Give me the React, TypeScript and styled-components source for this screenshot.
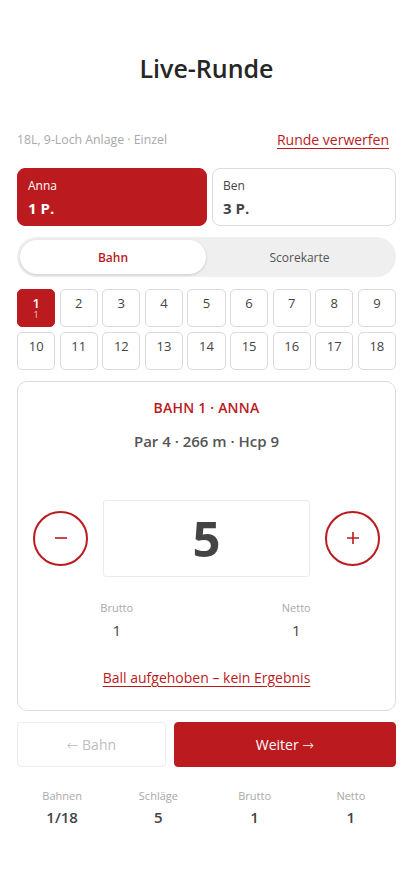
import styled, { createGlobalStyle } from "styled-components";

const RED = "#bb1a1e";

const GlobalStyle = createGlobalStyle`
  body {
    margin: 0;
    background: #ffffff;
    font-family: "Open Sans", "Noto Sans", sans-serif;
    color: #333;
  }
  * { box-sizing: border-box; }
`;

const Page = styled.div`
  width: 413px;
  padding: 50px 17px 40px;
  display: flex;
  flex-direction: column;
`;

const Title = styled.h1`
  margin: 0;
  font-size: 25px;
  line-height: 36px;
  font-weight: 600;
  text-align: center;
  color: #262626;
`;

const InfoRow = styled.div`
  margin-top: 43px;
  display: flex;
  justify-content: space-between;
  align-items: center;
  height: 20px;
`;

const InfoText = styled.span`
  font-size: 12.3px;
  color: #a9a9a9;
`;

const DiscardLink = styled.a`
  font-size: 14px;
  color: ${RED};
  text-decoration: underline;
  text-underline-offset: 3px;
  margin-right: 7px;
`;

const Players = styled.div`
  margin-top: 19px;
  display: grid;
  grid-template-columns: 190px 1fr;
  gap: 5px;
`;

const PlayerCard = styled.div<{ $active?: boolean }>`
  height: 58px;
  border-radius: 8px;
  padding: 8px 10px 7px;
  border: 1px solid ${(p) => (p.$active ? RED : "#dcdcdc")};
  background: ${(p) => (p.$active ? RED : "#fff")};
  color: ${(p) => (p.$active ? "#fff" : "#444")};
`;

const PlayerName = styled.div`
  font-size: 12px;
  line-height: 18px;
`;

const PlayerPoints = styled.div`
  margin-top: 3px;
  font-size: 15px;
  line-height: 20px;
  font-weight: 700;
`;

const Tabs = styled.div`
  margin-top: 11px;
  height: 40px;
  border-radius: 20px;
  background: #efefef;
  padding: 3px;
  display: grid;
  grid-template-columns: 186px 1fr;
`;

const Tab = styled.div<{ $active?: boolean }>`
  border-radius: 17px;
  display: flex;
  align-items: center;
  justify-content: center;
  font-size: 12px;
  font-weight: ${(p) => (p.$active ? 600 : 400)};
  color: ${(p) => (p.$active ? RED : "#555")};
  background: ${(p) => (p.$active ? "#fff" : "transparent")};
  box-shadow: ${(p) => (p.$active ? "0 1px 3px rgba(0,0,0,0.15)" : "none")};
`;

const HoleGrid = styled.div`
  margin-top: 12px;
  display: grid;
  grid-template-columns: repeat(9, 1fr);
  gap: 4.5px 4.3px;
`;

const Hole = styled.div<{ $active?: boolean }>`
  height: 38px;
  border-radius: 5px;
  border: 1px solid ${(p) => (p.$active ? RED : "#dadada")};
  background: ${(p) => (p.$active ? RED : "#fff")};
  color: ${(p) => (p.$active ? "#fff" : "#444")};
  display: flex;
  flex-direction: column;
  align-items: center;
  padding-top: 6px;
`;

const HoleNumber = styled.div<{ $active?: boolean }>`
  font-size: 13px;
  line-height: 14px;
  font-weight: ${(p) => (p.$active ? 600 : 400)};
`;

const HoleScore = styled.div`
  font-size: 9px;
  line-height: 9px;
  color: #f3c9ca;
`;

const HoleCard = styled.div`
  margin-top: 11px;
  border: 1px solid #dcdcdc;
  border-radius: 10px;
  padding: 14px 15px 21px;
  display: flex;
  flex-direction: column;
  align-items: center;
`;

const HoleHeading = styled.div`
  font-size: 14px;
  line-height: 24px;
  font-weight: 600;
  color: ${RED};
  letter-spacing: 0.2px;
`;

const HoleMeta = styled.div`
  margin-top: 10px;
  font-size: 15px;
  line-height: 22px;
  font-weight: 600;
  color: #555;
`;

const Stepper = styled.div`
  margin-top: 48px;
  width: 100%;
  display: grid;
  grid-template-columns: 55px 1fr 55px;
  gap: 15px;
  align-items: center;
`;

const RoundButton = styled.button`
  width: 55px;
  height: 55px;
  border-radius: 50%;
  border: 2px solid ${RED};
  background: #fff;
  color: ${RED};
  display: flex;
  align-items: center;
  justify-content: center;
  padding: 0;
`;

const ScoreBox = styled.div`
  height: 77px;
  border: 1px solid #ebebeb;
  border-radius: 3px;
  display: flex;
  align-items: center;
  justify-content: center;
  font-size: 49px;
  font-weight: 700;
  color: #444;
`;

const ResultGrid = styled.div`
  margin-top: 23px;
  width: 359px;
  display: grid;
  grid-template-columns: 1fr 1fr;
`;

const ResultCell = styled.div`
  display: flex;
  flex-direction: column;
  align-items: center;
`;

const SmallLabel = styled.div`
  font-size: 11px;
  line-height: 16px;
  color: #a8a8a8;
`;

const ResultValue = styled.div`
  margin-top: 3px;
  font-size: 15px;
  line-height: 22px;
  color: #444;
`;

const PickupLink = styled.a`
  margin-top: 26px;
  font-size: 14px;
  line-height: 22px;
  color: ${RED};
  text-decoration: underline;
  text-underline-offset: 3px;
`;

const NavRow = styled.div`
  margin-top: 11px;
  display: flex;
  gap: 8px;
`;

const NavButton = styled.button<{ $primary?: boolean; $grow: number }>`
  flex: ${(p) => p.$grow} 1 0;
  padding: 0;
  height: 45px;
  border-radius: 4px;
  font-family: inherit;
  font-size: 14px;
  border: 1px solid ${(p) => (p.$primary ? RED : "#ececec")};
  background: ${(p) => (p.$primary ? RED : "#fff")};
  color: ${(p) => (p.$primary ? "#fff" : "#bdbdbd")};
`;

const Arrow = styled.span`
  font-family: "Noto Sans", "DejaVu Sans", sans-serif;
  font-size: 14px;
  font-weight: 300;
`;

const Stats = styled.div`
  margin: 21px -3px 0;
  display: grid;
  grid-template-columns: repeat(4, 1fr);
`;

const StatValue = styled.div`
  margin-top: 3px;
  font-size: 15px;
  line-height: 20px;
  font-weight: 600;
  color: #444;
`;

const holes = Array.from({ length: 18 }, (_, i) => i + 1);

const stats = [
  { label: "Bahnen", value: "1/18" },
  { label: "Schläge", value: "5" },
  { label: "Brutto", value: "1" },
  { label: "Netto", value: "1" },
];

export default function App() {
  return (
    <>
      <GlobalStyle />
      <Page>
        <Title>Live-Runde</Title>

        <InfoRow>
          <InfoText>18L, 9-Loch Anlage · Einzel</InfoText>
          <DiscardLink>Runde verwerfen</DiscardLink>
        </InfoRow>

        <Players>
          <PlayerCard $active>
            <PlayerName>Anna</PlayerName>
            <PlayerPoints>1 P.</PlayerPoints>
          </PlayerCard>
          <PlayerCard>
            <PlayerName>Ben</PlayerName>
            <PlayerPoints>3 P.</PlayerPoints>
          </PlayerCard>
        </Players>

        <Tabs>
          <Tab $active>Bahn</Tab>
          <Tab>Scorekarte</Tab>
        </Tabs>

        <HoleGrid>
          {holes.map((n) => (
            <Hole key={n} $active={n === 1}>
              <HoleNumber $active={n === 1}>{n}</HoleNumber>
              {n === 1 && <HoleScore>1</HoleScore>}
            </Hole>
          ))}
        </HoleGrid>

        <HoleCard>
          <HoleHeading>BAHN 1 · ANNA</HoleHeading>
          <HoleMeta>Par 4 · 266 m · Hcp 9</HoleMeta>

          <Stepper>
            <RoundButton aria-label="weniger">
              <svg width="14" height="14" viewBox="0 0 14 14">
                <path d="M1 7h12" stroke="currentColor" strokeWidth="1.6" />
              </svg>
            </RoundButton>
            <ScoreBox>5</ScoreBox>
            <RoundButton aria-label="mehr">
              <svg width="14" height="14" viewBox="0 0 14 14">
                <path d="M1 7h12M7 1v12" stroke="currentColor" strokeWidth="1.6" />
              </svg>
            </RoundButton>
          </Stepper>

          <ResultGrid>
            <ResultCell>
              <SmallLabel>Brutto</SmallLabel>
              <ResultValue>1</ResultValue>
            </ResultCell>
            <ResultCell>
              <SmallLabel>Netto</SmallLabel>
              <ResultValue>1</ResultValue>
            </ResultCell>
          </ResultGrid>

          <PickupLink>Ball aufgehoben – kein Ergebnis</PickupLink>
        </HoleCard>

        <NavRow>
          <NavButton $grow={2}>
            <Arrow>←</Arrow> Bahn
          </NavButton>
          <NavButton $grow={3} $primary>
            Weiter <Arrow>→</Arrow>
          </NavButton>
        </NavRow>

        <Stats>
          {stats.map((s) => (
            <ResultCell key={s.label}>
              <SmallLabel>{s.label}</SmallLabel>
              <StatValue>{s.value}</StatValue>
            </ResultCell>
          ))}
        </Stats>
      </Page>
    </>
  );
}
